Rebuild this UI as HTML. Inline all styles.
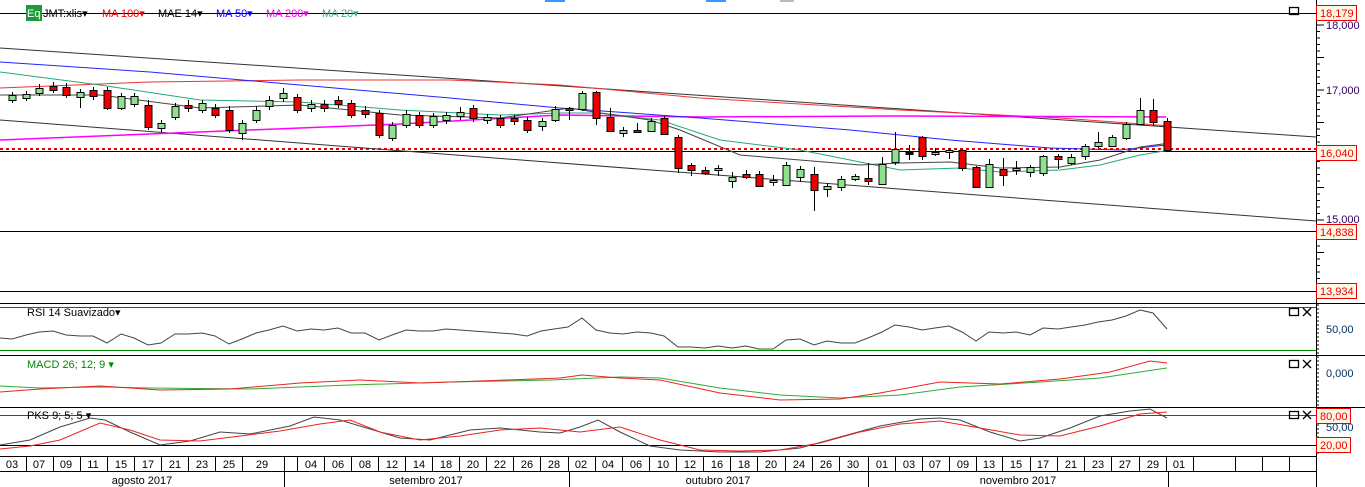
<!DOCTYPE html>
<html><head><meta charset="utf-8"><style>
body{margin:0;background:#fff;width:1365px;height:487px;overflow:hidden;font-family:"Liberation Sans",sans-serif}
svg{display:block}
text{font-family:"Liberation Sans",sans-serif;font-size:11px}
</style></head><body>
<svg id="s" width="1365" height="487" xmlns="http://www.w3.org/2000/svg">
<rect width="1365" height="487" fill="#fff"/>
<rect x="545" y="0" width="20" height="2" fill="#39f"/><rect x="706" y="0" width="20" height="2" fill="#39f"/><rect x="780" y="0" width="14" height="2" fill="#bbb"/>
<g stroke="#000" stroke-width="1">
<line x1="0" y1="13.5" x2="1316" y2="13.5"/>
<line x1="0" y1="151.5" x2="1316" y2="151.5"/>
<line x1="0" y1="231.5" x2="1316" y2="231.5"/>
<line x1="0" y1="291.5" x2="1316" y2="291.5"/>
<line x1="0" y1="303.5" x2="1365" y2="303.5"/>
<line x1="0" y1="355.5" x2="1365" y2="355.5"/>
<line x1="0" y1="407.5" x2="1365" y2="407.5"/>
<line x1="0" y1="445.5" x2="1316" y2="445.5"/>
<line x1="0" y1="456.5" x2="1316" y2="456.5"/>
<line x1="0" y1="471.5" x2="1316" y2="471.5"/>
<line x1="1316.5" y1="0" x2="1316.5" y2="487"/>
</g>
<line x1="0" y1="149" x2="1316" y2="149" stroke="#e00" stroke-width="2" stroke-dasharray="3,3"/>
<line x1="0" y1="307.5" x2="1316" y2="307.5" stroke="#e00"/>
<line x1="0" y1="350.5" x2="1316" y2="350.5" stroke="#080"/>
<line x1="0" y1="415.5" x2="1316" y2="415.5" stroke="#e00"/>
<line x1="0" y1="48" x2="1316" y2="137" stroke="#333"/>
<line x1="0" y1="120" x2="1316" y2="221" stroke="#333"/>
<polyline fill="none" stroke="#e33" stroke-width="1" points="0,88 150,82 300,80 450,80 560,85 700,98 900,110 1060,118 1170,126"/>
<polyline fill="none" stroke="#f0f" stroke-width="1.5" points="0,140 200,132 400,124 560,115 700,117 900,116 1166,117"/>
<polyline fill="none" stroke="#22f" stroke-width="1" points="0,62 150,72 300,85 450,98 560,108 700,118 850,130 950,140 1050,148 1120,150 1166,145"/>
<polyline fill="none" stroke="#2a7" stroke-width="1" points="0,72 100,85 200,100 300,102 400,110 500,115 560,113 600,113 660,120 720,140 800,150 860,162 900,170 960,168 1000,172 1060,170 1100,165 1140,155 1170,150"/>
<polyline fill="none" stroke="#444" stroke-width="1" points="0,95 100,95 200,108 300,105 400,115 500,118 570,108 600,113 650,120 680,130 740,155 800,160 860,165 900,163 950,162 1000,168 1060,167 1100,160 1140,147 1170,143"/>
<g id="c"></g>
<polyline fill="none" stroke="#444" points="0,338 12,339 26,335 39,332 53,331 66,335 80,336 93,336 107,343 121,334 134,338 148,345 161,343 175,334 188,334 202,333 215,336 229,344 242,339 256,333 269,330 283,326 297,331 311,329 324,330 338,328 351,333 365,333 379,340 392,335 406,330 419,331 433,331 446,329 460,330 473,331 487,332 500,333 514,334 527,336 541,331 554,329 568,327 582,318 596,330 610,333 623,334 637,332 651,333 664,336 678,347 691,347 705,348 718,346 732,348 746,346 759,349 773,349 786,340 800,339 814,345 827,341 841,343 855,343 868,338 882,332 895,325 909,327 922,330 935,328 949,326 962,332 976,341 989,332 1003,333 1016,332 1030,335 1043,328 1058,329 1071,327 1085,325 1098,322 1112,320 1126,316 1140,310 1153,313 1167,329"/>
<polyline fill="none" stroke="#3a3" points="0,386 40,388 100,387 150,388 250,389 350,385 450,382 550,380 620,377 660,378 720,388 780,395 840,398 900,395 960,387 1040,382 1100,378 1140,372 1167,368"/>
<polyline fill="none" stroke="#e22" points="0,392 40,389 100,386 160,390 230,389 300,383 360,380 420,383 480,381 560,378 582,375 620,378 660,380 720,393 780,400 840,399 880,393 940,382 1000,384 1060,379 1110,372 1150,361 1167,363"/>
<polyline fill="none" stroke="#444" points="0,445 30,440 60,427 90,418 105,420 130,432 160,445 190,441 220,432 250,434 290,426 314,417 340,420 370,429 400,438 430,440 470,430 500,428 540,432 560,433 580,427 598,420 620,432 650,446 680,450 720,452 760,452 800,448 840,437 880,426 920,419 940,418 960,420 990,432 1020,441 1040,438 1070,428 1100,416 1130,411 1150,409 1167,418"/>
<polyline fill="none" stroke="#e22" points="0,449 30,446 60,440 100,423 130,430 160,440 200,441 240,436 280,431 320,424 350,420 380,432 420,440 460,436 500,430 540,428 580,432 620,427 660,440 700,450 740,451 780,450 820,443 860,432 900,424 940,421 980,428 1020,435 1060,436 1100,426 1140,414 1167,412"/>
<g font-size="12">
<rect x="26" y="5" width="16" height="16" fill="#1a9a3a"/>
<text x="27" y="17" fill="#fff" font-size="12">Eq</text>
<text x="43" y="17" fill="#000" font-size="12">JMT:xlis▾</text>
<text x="102" y="17" fill="#e00" font-size="12">MA 100▾</text>
<text x="158" y="17" fill="#000" font-size="12">MAE 14▾</text>
<text x="216" y="17" fill="#00f" font-size="12">MA 50▾</text>
<text x="266" y="17" fill="#e0e" font-size="12">MA 200▾</text>
<text x="322" y="17" fill="#4a8" font-size="12">MA 20▾</text>
</g>
<text x="27" y="316" fill="#000">RSI 14 Suavizado▾</text>
<text x="27" y="368" fill="#080">MACD 26; 12; 9 ▾</text>
<text x="27" y="419" fill="#000">PKS 9; 5; 5 ▾</text>
<g fill="none" stroke="#000" stroke-width="1.3">
<rect x="1289.5" y="7.5" width="9" height="7"/>
<rect x="1289.5" y="308.5" width="9" height="7"/><path d="M1303 308l8 8M1311 308l-8 8"/>
<rect x="1289.5" y="360.5" width="9" height="7"/><path d="M1303 360l8 8M1311 360l-8 8"/>
<rect x="1289.5" y="411.5" width="9" height="7"/><path d="M1303 411l8 8M1311 411l-8 8"/>
</g>
<g id="ax"></g>
<g font-size="11">
<text x="1326" y="29" fill="#306">18,000</text>
<text x="1326" y="94" fill="#306">17,000</text>
<text x="1326" y="223" fill="#306">15,000</text>
<text x="1326" y="333" fill="#036">50,00</text>
<text x="1326" y="377" fill="#036">0,000</text>
<text x="1326" y="431" fill="#036">50,00</text>
</g>
<g fill="#fdf8e4" stroke="#e00">
<rect x="1316.5" y="5.5" width="40" height="15"/>
<rect x="1316.5" y="145.5" width="40" height="15"/>
<rect x="1316.5" y="224.5" width="40" height="15"/>
<rect x="1316.5" y="283.5" width="40" height="15"/>
<rect x="1316.5" y="408.5" width="34" height="15"/>
<rect x="1316.5" y="437.5" width="34" height="15"/>
</g>
<g fill="#e00" font-size="11">
<text x="1320" y="17">18,179</text><text x="1320" y="157">16,040</text><text x="1320" y="236">14,838</text><text x="1320" y="295">13,934</text><text x="1320" y="420">80,00</text><text x="1320" y="449">20,00</text>
</g>
<g id="dt" font-size="11" text-anchor="middle" fill="#000"></g>
</svg>
<script>
var NS="http://www.w3.org/2000/svg";
function el(p,t,a,tx){var e=document.createElementNS(NS,t);for(var k in a)e.setAttribute(k,a[k]);if(tx)e.textContent=tx;p.appendChild(e);return e;}
var C=[[12,'g',95,100,92,103],[26,'g',94,98,91,101],[39,'g',88,93,84,96],[53,'r',86,90,82,93],[66,'r',87,95,83,98],[80,'g',92,97,89,108],[93,'r',90,96,87,100],[107,'r',90,108,87,110],[121,'g',96,108,93,110],[134,'g',96,104,93,107],[148,'r',105,127,100,130],[161,'g',123,128,120,132],[175,'g',106,117,103,120],[188,'r',105,108,100,112],[202,'g',103,110,100,113],[215,'r',108,115,104,118],[229,'r',110,130,106,133],[242,'g',123,133,120,140],[256,'g',110,120,106,123],[269,'g',100,106,96,110],[283,'g',93,98,88,102],[297,'r',97,110,94,113],[311,'g',104,108,100,112],[324,'r',104,108,100,112],[338,'r',100,104,96,108],[351,'r',103,115,100,118],[365,'r',110,114,106,118],[379,'r',113,135,110,138],[392,'g',125,138,122,141],[406,'g',114,125,110,128],[419,'r',115,125,112,128],[433,'g',116,125,113,128],[446,'g',115,120,112,124],[460,'g',112,116,107,120],[473,'r',108,118,105,122],[487,'g',117,120,114,124],[500,'r',118,125,115,128],[514,'r',118,121,115,125],[527,'r',120,130,117,133],
[542,'g',121,126,118,131],[555,'g',109,120,106,122],[569,'b',108,110,107,120],[582,'g',93,109,91,111],[596,'r',92,118,91,125],[610,'r',117,131,108,131],[623,'g',130,133,127,137],[637,'r',130,132,123,133],[651,'g',121,131,118,132],[664,'r',118,134,116,135],[678,'r',137,168,135,173],[691,'r',165,170,163,176],[705,'r',170,173,167,175],[718,'g',168,170,165,176],[732,'g',177,181,172,188],[746,'r',174,177,170,179],[759,'r',174,186,171,187],[773,'g',180,182,175,186],[786,'g',165,185,162,186],[800,'g',169,177,166,182],[814,'r',174,190,167,211],[827,'g',186,189,183,197],[841,'g',179,187,176,191],[855,'g',176,179,174,181],
[868,'r',178,181,163,185],[882,'g',164,184,157,185],[895,'g',149,162,132,165],[909,'k',152,153,145,160],[922,'r',137,156,136,160],[935,'g',152,154,148,156],[949,'g',150,152,148,159],[962,'r',150,168,149,171],[976,'r',167,187,166,188],[989,'g',164,187,159,188],[1003,'r',169,175,158,186],[1016,'g',168,170,161,175],[1030,'g',167,172,165,177],[1043,'g',156,173,155,176],[1058,'r',156,159,154,169],[1071,'g',157,163,154,165],[1085,'g',146,156,144,160],[1098,'g',142,146,132,148],[1112,'g',137,146,135,147],[1126,'g',124,138,122,140],[1140,'g',110,124,98,125],[1153,'r',110,122,99,126],[1167,'r',121,150,118,151]];
var g=document.getElementById('c');
C.forEach(function(c){var x=c[0];el(g,'line',{x1:x+.5,y1:c[4],x2:x+.5,y2:c[5],stroke:'#000'});
var f=c[1]=='g'?'#8fe08f':c[1]=='r'?'#e00':c[1]=='b'?'#44c':'#111';
el(g,'rect',{x:x-3,y:c[2]+.5,width:7,height:Math.max(2,c[3]-c[2]),fill:f,stroke:'#000','stroke-width':1});});
var D=[['03',12],['07',39],['09',66],['11',93],['15',121],['17',148],['21',175],['23',202],['25',229],['29',262],['04',311],['06',338],['08',365],['12',392],['14',419],['18',446],['20',473],['22',500],['26',527],['28',554],['02',581],['04',608],['06',636],['10',663],['12',690],['16',717],['18',744],['20',771],['24',799],['26',826],['30',853],['01',882],['03',909],['07',935],['09',963],['13',989],['15',1016],['17',1043],['21',1071],['23',1098],['27',1125],['29',1153],['01',1179]];
var dt=document.getElementById('dt');
D.forEach(function(d){el(dt,'text',{x:d[1],y:468},d[0]);});
var ax=document.getElementById('ax');
var seps=[26,53,80,107,134,161,188,215,242,284,297,324,351,378,405,432,459,486,513,540,568,595,622,649,676,703,730,757,785,812,839,868,895,922,949,976,1002,1030,1057,1084,1111,1139,1166,1193,1235,1262,1289];
seps.forEach(function(x){el(ax,'line',{x1:x+.5,y1:456,x2:x+.5,y2:471,stroke:'#000'});});
[284,569,868,1168].forEach(function(x){el(ax,'line',{x1:x+.5,y1:471,x2:x+.5,y2:487,stroke:'#000'});});
[['agosto 2017',142],['setembro 2017',426],['outubro 2017',718],['novembro 2017',1018]].forEach(function(m){el(dt,'text',{x:m[1],y:484},m[0]);});
for(var y=12;y<300;y+=6.5){el(ax,'line',{x1:1316,y1:y,x2:(Math.round((y-25)/6.5)%5==0)?1324:1320,y2:y,stroke:'#000'});}
for(var y=305;y<454;y+=4){el(ax,'line',{x1:1316,y1:y,x2:1319,y2:y,stroke:'#000'});}
</script>
</body></html>
